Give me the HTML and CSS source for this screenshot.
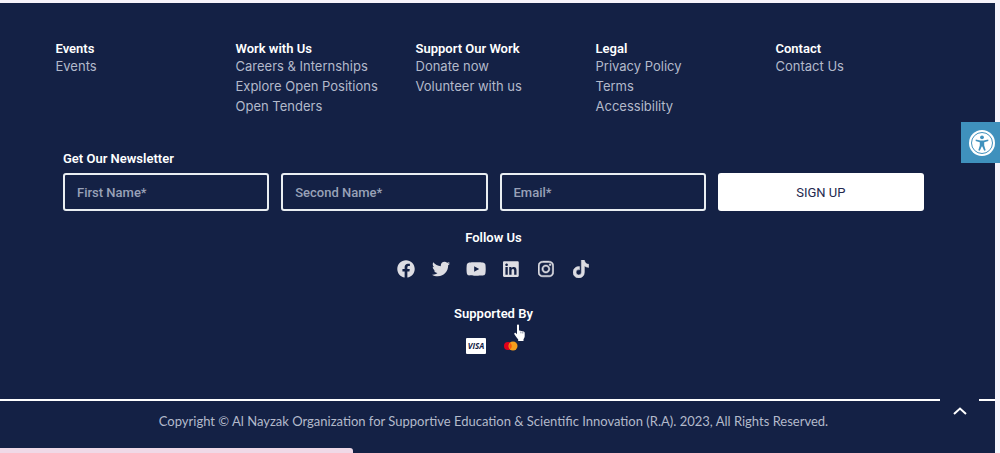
FILE: index.html
```html
<!DOCTYPE html>
<html lang="en">

<head>
    <meta charset="utf-8">
    <meta name="viewport" content="width=device-width, initial-scale=1">
    <title>Al Nayzak</title>
    <link rel="stylesheet" href="styles.css">
</head>
<body>
    <footer class="footer">
        <div class="footer-main">
            <nav class="columns">
                <div class="column">
                    <h4>Events</h4>
                    <a href="#">Events</a>
                </div>
                <div class="column">
                    <h4>Work with Us</h4>
                    <a href="#">Careers &amp; Internships</a>
                    <a href="#">Explore Open Positions</a>
                    <a href="#">Open Tenders</a>
                </div>
                <div class="column">
                    <h4>Support Our Work</h4>
                    <a href="#">Donate now</a>
                    <a href="#">Volunteer with us</a>
                </div>
                <div class="column">
                    <h4>Legal</h4>
                    <a href="#">Privacy Policy</a>
                    <a href="#">Terms</a>
                    <a href="#">Accessibility</a>
                </div>
                <div class="column">
                    <h4>Contact</h4>
                    <a href="#">Contact Us</a>
                </div>
            </nav>

            <form class="newsletter">
                <h4>Get Our Newsletter</h4>
                <div class="fields">
                    <input type="text" placeholder="First Name*" aria-label="First Name">
                    <input type="text" placeholder="Second Name*" aria-label="Second Name">
                    <input type="email" placeholder="Email*" aria-label="Email">
                    <button type="submit">SIGN UP</button>
                </div>
            </form>

            <div class="follow">
                <h4>Follow Us</h4>
                <div class="social">
                    <a href="#" aria-label="Facebook"><svg viewBox="0 0 512 512"><path d="M504 256C504 119 393 8 256 8S8 119 8 256c0 123.780 90.690 226.380 209.250 245V327.690h-63V256h63v-54.640c0-62.150 37-96.480 93.670-96.480 27.140 0 55.520 4.840 55.520 4.840v61h-31.280c-30.800 0-40.410 19.120-40.410 38.730V256h68.780l-11 71.690h-57.780V501C413.310 482.380 504 379.780 504 256z"/></svg></a>
                    <a href="#" aria-label="Twitter"><svg viewBox="0 0 512 512"><path d="M459.370 151.716c.325 4.548.325 9.097.325 13.645 0 138.720-105.583 298.558-298.558 298.558-59.452 0-114.680-17.219-161.137-47.106 8.447.974 16.568 1.299 25.340 1.299 49.055 0 94.213-16.568 130.274-44.832-46.132-.975-84.792-31.188-98.112-72.772 6.498.974 12.995 1.624 19.818 1.624 9.421 0 18.843-1.300 27.614-3.573-48.081-9.747-84.143-51.980-84.143-102.985v-1.299c13.969 7.797 30.214 12.670 47.431 13.319-28.264-18.843-46.781-51.005-46.781-87.391 0-19.492 5.197-37.360 14.294-52.954 51.655 63.675 129.300 105.258 216.365 109.807-1.624-7.797-2.599-15.918-2.599-24.040 0-57.828 46.782-104.934 104.934-104.934 30.213 0 57.502 12.670 76.670 33.137 23.715-4.548 46.456-13.320 66.599-25.340-7.798 24.366-24.366 44.833-46.132 57.827 21.117-2.273 41.584-8.122 60.426-16.243-14.292 20.791-32.161 39.308-52.628 54.253z"/></svg></a>
                    <a href="#" aria-label="YouTube"><svg class="wide" viewBox="0 0 576 512"><path d="M549.655 124.083c-6.281-23.650-24.787-42.276-48.284-48.597C458.781 64 288 64 288 64S117.220 64 74.629 75.486c-23.497 6.322-42.003 24.947-48.284 48.597-11.412 42.867-11.412 132.305-11.412 132.305s0 89.438 11.412 132.305c6.281 23.650 24.787 41.500 48.284 47.821C117.220 448 288 448 288 448s170.780 0 213.371-11.486c23.497-6.321 42.003-24.171 48.284-47.821 11.412-42.867 11.412-132.305 11.412-132.305s0-89.438-11.412-132.305zm-317.510 213.508V175.185l142.739 81.205-142.739 81.201z"/></svg></a>
                    <a href="#" aria-label="LinkedIn"><svg viewBox="0 0 448 512"><path d="M416 32H31.900C14.300 32 0 46.500 0 64.300v383.400C0 465.500 14.300 480 31.900 480H416c17.600 0 32-14.500 32-32.300V64.300c0-17.800-14.400-32.300-32-32.300zM135.400 416H69V202.200h66.500V416zm-33.200-243c-21.300 0-38.500-17.300-38.500-38.500S80.900 96 102.200 96c21.200 0 38.500 17.300 38.500 38.500 0 21.300-17.200 38.500-38.500 38.500zm282.100 243h-66.400V312c0-24.800-.5-56.700-34.500-56.700-34.600 0-39.900 27-39.900 54.900V416h-66.400V202.200h63.700v29.200h.9c8.900-16.800 30.600-34.500 62.900-34.500 67.200 0 79.700 44.300 79.700 101.900V416z"/></svg></a>
                    <a href="#" aria-label="Instagram"><svg viewBox="0 0 448 512"><path d="M224.100 141c-63.600 0-114.900 51.300-114.900 114.900s51.300 114.900 114.900 114.900S339 319.500 339 255.900 287.700 141 224.100 141zm0 189.600c-41.100 0-74.700-33.500-74.700-74.700s33.500-74.700 74.700-74.700 74.700 33.500 74.700 74.700-33.600 74.700-74.700 74.700zm146.400-194.300c0 14.900-12 26.800-26.800 26.800-14.900 0-26.800-12-26.800-26.800s12-26.800 26.800-26.800 26.800 12 26.800 26.800zm76.100 27.200c-1.700-35.900-9.900-67.700-36.200-93.900-26.200-26.200-58-34.400-93.900-36.200-37-2.100-147.900-2.100-184.900 0-35.800 1.700-67.600 9.900-93.900 36.100s-34.400 58-36.200 93.900c-2.100 37-2.100 147.900 0 184.900 1.700 35.900 9.900 67.700 36.200 93.900s58 34.400 93.900 36.200c37 2.100 147.900 2.100 184.900 0 35.900-1.700 67.700-9.900 93.900-36.200 26.200-26.200 34.400-58 36.200-93.900 2.100-37 2.100-147.800 0-184.800zM398.800 388c-7.800 19.600-22.900 34.700-42.600 42.600-29.500 11.700-99.500 9-132.100 9s-102.700 2.600-132.100-9c-19.600-7.800-34.700-22.900-42.600-42.600-11.700-29.500-9-99.500-9-132.100s-2.600-102.700 9-132.100c7.800-19.600 22.900-34.700 42.600-42.600 29.500-11.700 99.500-9 132.100-9s102.700-2.600 132.100 9c19.600 7.800 34.700 22.900 42.600 42.600 11.700 29.500 9 99.500 9 132.100s2.700 102.700-9 132.100z" stroke="#dddde3" stroke-width="14"/></svg></a>
                    <a href="#" aria-label="TikTok"><svg viewBox="0 0 448 512"><path d="M448 209.910a210.060 210.060 0 0 1-122.770-39.250v178.720A162.550 162.550 0 1 1 185 188.310v89.890a74.620 74.620 0 1 0 52.230 71.180V0h88a121.180 121.180 0 0 0 1.860 22.170A122.180 122.180 0 0 0 381 102.390a121.430 121.430 0 0 0 67 20.140z" stroke="#dddde3" stroke-width="14"/></svg></a>
                </div>
            </div>

            <div class="supported">
                <h4>Supported By</h4>
                <div class="cards">
                    <svg class="card" viewBox="0 0 20 16" role="img" aria-label="Visa">
                        <rect width="20" height="16" rx="1" fill="#fff"/>
                        <text class="visa" x="10" y="11" text-anchor="middle">VISA</text>
                    </svg>
                    <svg class="card" viewBox="0 0 20 16" role="img" aria-label="Mastercard">
                        <circle cx="7" cy="8" r="4" fill="#e0001b"/>
                        <circle cx="12" cy="8" r="4.500" fill="#f59e1c"/>
                        <path d="M9.500 4.900a4.400 4.400 0 0 1 0 6.200 4.400 4.400 0 0 1 0-6.200z" fill="#f45b0c"/>
                    </svg>
                </div>
            </div>
        </div>

        <div class="copyright">
            <p>Copyright © Al Nayzak Organization for Supportive Education &amp; Scientific Innovation (R.A). 2023, All Rights Reserved.</p>
        </div>
    </footer>

    <button class="to-top" aria-label="Back to top">
        <svg viewBox="0 0 14 8"><path d="M1 7 7 1.500 13 7"/></svg>
    </button>

    <button class="accessibility" aria-label="Accessibility tools">
        <svg viewBox="0 0 26 26">
            <circle cx="13" cy="13" r="13" fill="#fff"/>
            <circle cx="13" cy="13" r="10.500" fill="none" stroke="#3f91bd" stroke-width="1"/>
            <circle cx="13" cy="7.300" r="1.900" fill="#3f91bd"/>
            <path d="M6.800 9.600 11.300 10.400h3.400l4.500-.8.200 1.400-4.200 1.200v3.300l1.500 4.700-1.500.5L13.300 16.500h-.6l-1.900 4.200-1.500-.5 1.500-4.700v-3.300L6.600 11z" fill="#3f91bd"/>
        </svg>
    </button>

    <div class="status-bar"></div>

    <svg class="pointer" viewBox="0 0 12 17">
        <path d="M3 1.600C3 .2 5 .2 5 1.600v5.200c.5-.5 1.500-.4 1.900.3.600-.4 1.600-.2 1.900.5.900-.3 1.900.3 1.900 1.300V12c0 1.500-.6 2.400-1.200 3.300V17H4.200v-1.500C3 13.900 1.500 12 .4 10.200c-.5-.9.500-1.800 1.300-1.200L3 10.200z"/>
        <path class="finger" d="M6.900 7.500v1.800M8.800 8v1.500"/>
    </svg>
</body>

</html>
```

FILE: styles.css
```css
* {
    box-sizing: border-box;
}
body {
    margin: 0;
    padding: 3px 5px 0 0;
    background: #f6f3fa;
    font-family: Roboto, sans-serif;
    font-size: 13px;
}
h4, p {
    margin: 0;
}
h4 {
    color: #fff;
    font-size: 13px;
    font-weight: 600;
    line-height: 14px;
}
a {
    color: #b3bacb;
    text-decoration: none;
}
button {
    border: none;
    cursor: pointer;
}
svg {
    display: block;
}

.footer {
    background: #142145;
    min-height: calc(100vh - 3px);
}
.footer-main {
    padding: 39px 8px 45px 0;
    border-bottom: 2px solid #fff;
}
.columns {
    display: grid;
    grid-template-columns: repeat(5, 1fr);
    max-width: 900px;
    min-height: 110px;
    margin: 0 auto;
}
.column {
    display: flex;
    flex-direction: column;
    padding-left: 12px;
}
.column a {
    font-family: Inter, sans-serif;
    font-size: 13px;
    line-height: 20px;
}

.newsletter {
    max-width: 861px;
    margin: 0 auto;
}
.fields {
    display: grid;
    grid-template-columns: repeat(4, 1fr);
    gap: 12px;
    margin-top: 7px;
}
.fields input, .fields button {
    min-width: 0;
    height: 38px;
    border-radius: 3px;
    font-family: Roboto, sans-serif;
    font-size: 13px;
}
.fields input {
    border: 2px solid #e9eef2;
    background: none;
    color: #fff;
    padding: 0 12px;
    font-weight: 500;
}
.fields input::placeholder {
    color: #99a1b8;
}
.fields button {
    background: #fff;
    color: #23284f;
}

.follow, .supported {
    text-align: center;
}
.follow {
    margin-top: 20px;
}
.social {
    display: flex;
    justify-content: center;
    gap: 15px;
    margin-top: 15px;
}
.social a {
    display: flex;
    justify-content: center;
    width: 20px;
}
.social svg {
    height: 18px;
    fill: #dddde3;
}
.social .wide {
    flex: none;
}
.supported {
    margin-top: 29px;
}
.cards {
    display: flex;
    justify-content: center;
    gap: 15px;
    margin-top: 17px;
}
.card {
    width: 20px;
    height: 16px;
}
.visa {
    fill: #142145;
    font: italic 700 8px "Open Sans", sans-serif;
}

.copyright {
    padding: 11px 8px 0 0;
    color: #b3bacb;
    font-family: Lato, sans-serif;
    font-size: 13px;
    line-height: 18px;
    text-align: center;
}

/* floating items */
.to-top {
    position: fixed;
    right: 21px;
    bottom: 23px;
    display: flex;
    align-items: center;
    justify-content: center;
    width: 39px;
    height: 39px;
    padding: 0;
    background: #142145;
}
.to-top svg {
    width: 14px;
    height: 8px;
    fill: none;
    stroke: #fff;
    stroke-width: 2;
}
.accessibility {
    position: fixed;
    top: 122px;
    right: 0;
    width: 39px;
    height: 41px;
    padding: 0 0 0 8px;
    background: #3f91bd;
}
.accessibility svg {
    width: 26px;
    height: 26px;
}
.status-bar {
    position: fixed;
    left: 0;
    bottom: 0;
    width: 353px;
    height: 5px;
    background: #f0d9e7;
    border-top-right-radius: 3px;
}
.pointer {
    position: absolute;
    left: 514px;
    top: 324px;
    width: 12px;
    height: 17px;
    fill: #fff;
}
.finger {
    fill: none;
    stroke: #8890a6;
    stroke-width: 1;
}
```
